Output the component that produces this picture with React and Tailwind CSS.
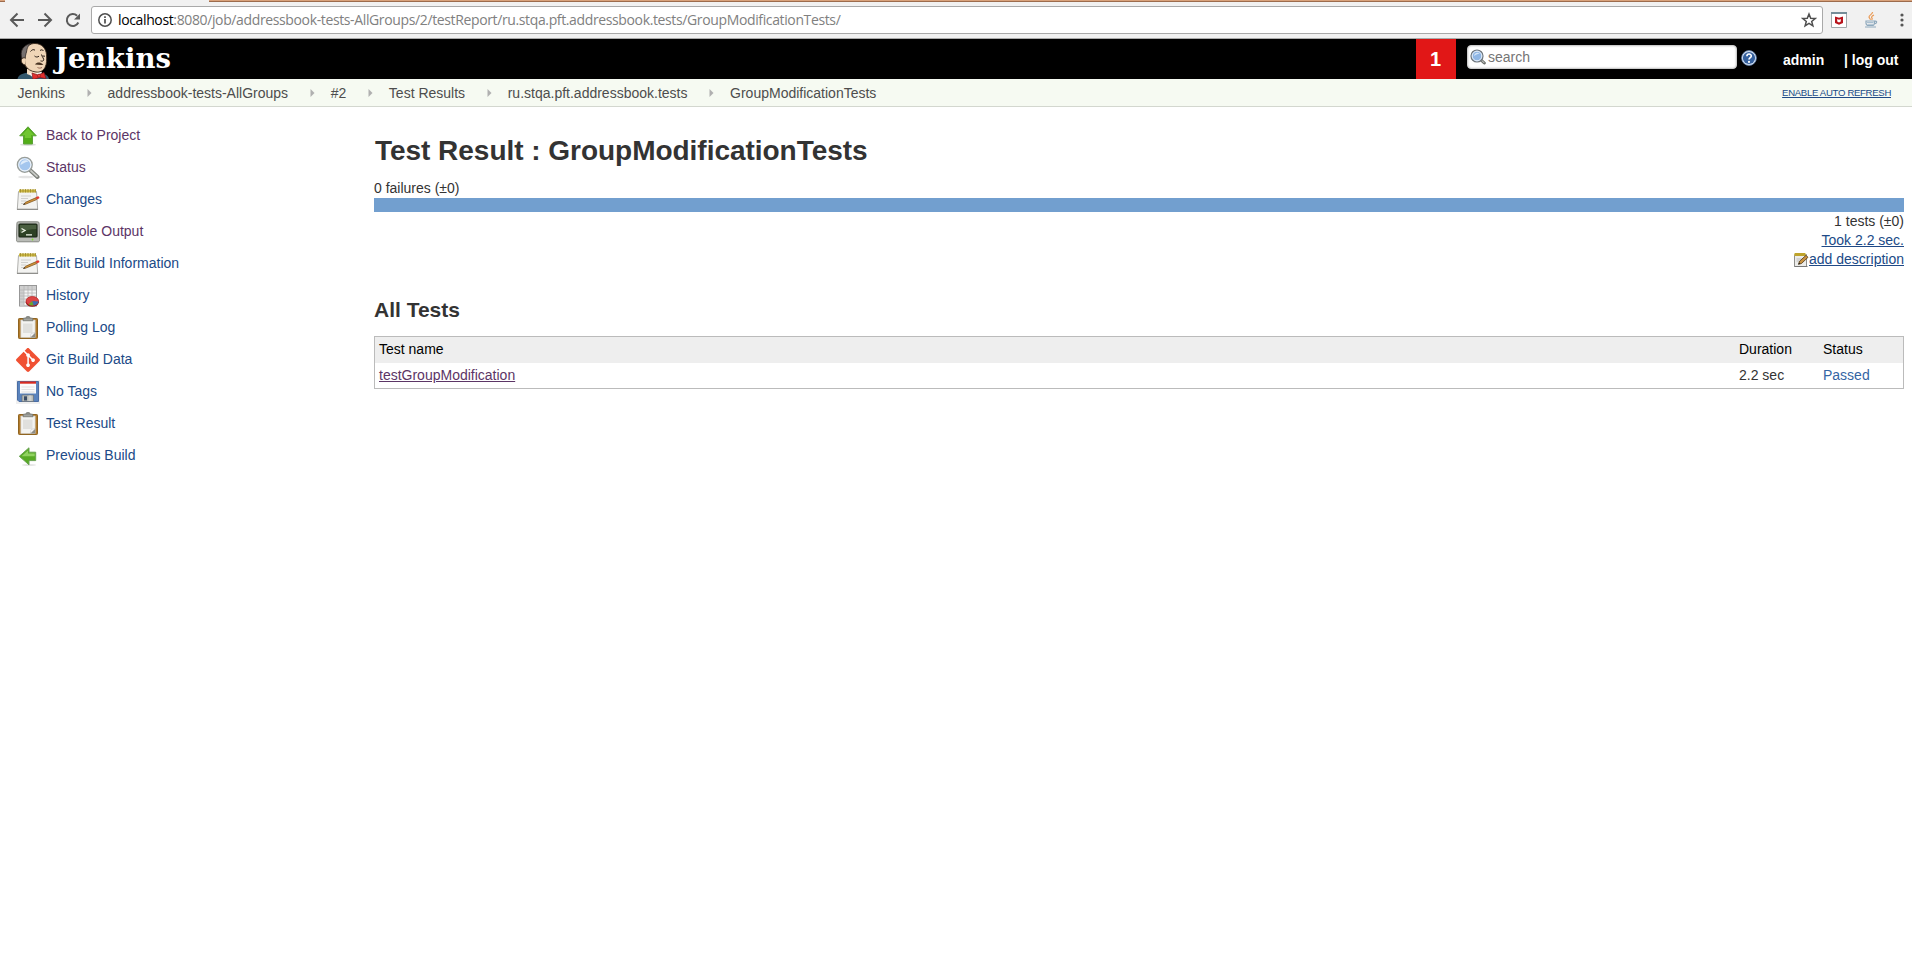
import React from 'react';

const LogoHead = () => (
  <svg width="34" height="37" viewBox="0 0 34 37" className="block">
    <path d="M.5 37c.5-3 3-5 8-6l6-1 9 1c5 1 8 3 8.500 6z" fill="#33576b" />
    <path d="M10 27h13v7l-6 1-7-3z" fill="#f3dcc0" />
    <path d="M12 31l4 5 2-3 4 3 3-5-1-2-5 3z" fill="#fff" />
    <path d="M7 11C8.500 4 13 1.500 18 1.500c7 0 11 5 11.500 11 .3 5 .5 9-1.500 13-2 3.500-5 5-9 4.500-5-.5-9-3-11-7z" fill="#f0d6b7" stroke="#3a2a1c" strokeWidth=".9" />
    <path d="M5 17C2.500 9 6 3 14 1.500 10.500 4 10 7 9.500 10c-.6 2-1.300 4-1.300 7z" fill="#77716f" stroke="#2c2522" strokeWidth=".8" />
    <path d="M8.500 16c-5-1.500-6 5.500-.5 7" fill="#f0d6b7" stroke="#3a2a1c" strokeWidth="1" />
    <path d="M13.500 9.500c1.500-2 3-2.300 4.500-1.300M23 8.500c1.500-1 2.500-1 3.500.5M17.500 14c1.500 1.300 3 1.300 4.500.2M25.500 14l2.500.2M24.500 12.500c.5 2.500 3 4.500 2 6-.8 1-2 .6-3 .4" fill="none" stroke="#2c2018" strokeWidth="1" />
    <path d="M18 22.500c1.500-2 4-2.500 6-1.500l2.500 1.500c-2.500 1-5 .3-8.500 0z" fill="#4a3524" />
    <path d="M20.500 25.500c1.500.8 3 .8 4.500 0" fill="none" stroke="#8a5a48" strokeWidth=".9" />
    <path d="M15 31l6 2 6-2.500 2 6-6.500-1-6.500 2z" fill="#e0302e" stroke="#81161a" strokeWidth=".7" />
    <circle cx="22" cy="33.700" r="1.600" fill="#ef3d3a" stroke="#81161a" strokeWidth=".6" />
  </svg>
);

const Up = () => (
  <svg width="24" height="24" viewBox="0 0 24 24">
    <ellipse cx="12" cy="20.700" rx="8" ry="1.300" fill="#ddd" />
    <path d="M12 2.800l8.300 9h-3.800v8.200H7.500v-8.200H3.700z" fill="#52ad18" stroke="#5da238" strokeWidth="1" />
    <path d="M12 4.500l6 6.600h-2.800v3H8.800v-3H6z" fill="#7fd03c" opacity=".7" />
  </svg>
);
const Left = () => (
  <svg width="24" height="24" viewBox="0 0 24 24">
    <ellipse cx="13" cy="21" rx="7" ry="1" fill="#e5e5e5" />
    <path d="M3.300 12.300l9.700-8.500v4.400h6.700v8.400H13v4.200z" fill="#58ab25" stroke="#6aa352" strokeWidth="1" />
    <path d="M5.500 12.300l6.500-5.800v3h6.700v2.800z" fill="#9bd86c" opacity=".85" />
  </svg>
);
const Search = ({ size = 24 }) => (
  <svg width={size} height={size} viewBox="0 0 24 24">
    <ellipse cx="10" cy="21" rx="8" ry="1.300" fill="#e4e4e4" />
    <path d="M14.500 14.500l7 6.500" stroke="#7c7f7a" strokeWidth="4" strokeLinecap="round" />
    <path d="M15 14.800l6 5.600" stroke="#c9cbc7" strokeWidth="1.800" strokeLinecap="round" />
    <circle cx="8.800" cy="8.800" r="7.400" fill="#a4c6ee" stroke="#9a9e99" strokeWidth="1.400" />
    <circle cx="8.800" cy="8.800" r="6.100" fill="none" stroke="#eef3f8" strokeWidth="1.100" />
    <path d="M4.500 9c0-3 2-4.800 5-4.800 1.500 0 2.500.6 3 1.300C9 6 7 8 4.500 9z" fill="#dfecfa" />
  </svg>
);
const HeaderSearch = () => (
  <svg width="16" height="16" viewBox="0 0 16 16">
    <path d="M11 11l3.300 3" stroke="#676a66" strokeWidth="3" strokeLinecap="round" />
    <path d="M11.300 11.200l2.700 2.500" stroke="#b9bbb7" strokeWidth="1.100" strokeLinecap="round" />
    <circle cx="7" cy="7" r="6" fill="#8fb6e4" stroke="#70767a" strokeWidth="1.200" />
    <circle cx="7" cy="7" r="4.800" fill="none" stroke="#e8eff7" strokeWidth="1" />
    <path d="M4 7c0-2 1.500-3.300 3.500-3.300 1 0 1.700.4 2 .9C7.300 5 5.500 6 4 7z" fill="#d3e4f7" />
  </svg>
);
const Notepad = () => (
  <svg width="24" height="24" viewBox="0 0 24 24">
    <path d="M2.500 3.500h18l1.200 18H1.300z" fill="#f3f3f1" stroke="#b0b0ad" strokeWidth="1" />
    <path d="M1 20.700h21V22H1z" fill="#8f8f8c" />
    <path d="M3 1.500h17v3H3z" fill="#cdb944" />
    <path d="M4.500 1v3.500M7 1v3.500M9.500 1v3.500M12 1v3.500M14.500 1v3.500M17 1v3.500M19.300 1v3.500" stroke="#9a872a" strokeWidth=".8" />
    <path d="M5 8h10M5 10.500h7M5 13h5M5 15.500h3" stroke="#cfcfcd" strokeWidth="1" />
    <path d="M7.500 16.500l2-2.200 10.300-4.500.8 1.800L10 16z" fill="#d8973a" stroke="#7d5520" strokeWidth=".8" />
    <path d="M7 16.800l1.500-1.600 1 1z" fill="#333" />
    <path d="M19.700 9.300l2.300-1c.9 0 1.700 1.200 1.300 1.900l-2.400 1.200z" fill="#e33b2e" />
  </svg>
);
const Terminal = () => (
  <svg width="24" height="24" viewBox="0 0 24 24">
    <path d="M2.500 1.800h19c1 0 1.500.5 1.600 1.500l.6 16.500c0 1.200-.6 2-1.800 2H2.100c-1.200 0-1.800-.8-1.800-2l.6-16.500c.1-1 .6-1.500 1.600-1.500z" fill="#b9bbb6" stroke="#7c7e78" strokeWidth=".9" />
    <rect x="3" y="4" width="18" height="13" rx="1" fill="#2d4124" stroke="#1b2616" strokeWidth="1.200" />
    <path d="M3.800 5h16.500v4c-6 0-12 1-16.500 4z" fill="#5a7050" opacity=".65" />
    <path d="M5.500 8.500l3.500 2-3.500 2M10 14.800h6" fill="none" stroke="#eef5e8" strokeWidth="1.300" />
    <circle cx="16.500" cy="19.500" r=".9" fill="#7ee02c" />
  </svg>
);
const History = () => (
  <svg width="24" height="24" viewBox="0 0 24 24">
    <rect x="3.500" y="1.500" width="17" height="20.500" fill="#f3f3f3" stroke="#979797" />
    <path d="M4 2h16v4H4zM4 6h4v15.500H4z" fill="#cfcfcf" />
    <path d="M8 2v19.500M12 2v19M16 2v19M4 6h16M4 9h16M4 12h16M4 15h16M4 18h16" stroke="#b5b5b5" strokeWidth=".8" />
    <ellipse cx="16.300" cy="18.300" rx="6.500" ry="4.500" fill="#8c1616" />
    <ellipse cx="16.300" cy="17" rx="6.300" ry="4.500" fill="#dc4545" stroke="#b82525" strokeWidth=".7" />
    <path d="M16.300 17l-3.800 3.500c1.500.9 3.200 1.200 4.800 1z" fill="#67a92c" />
    <path d="M16.300 17l1.300 4.500c2.800-.4 4.600-1.900 5-3.900z" fill="#3d6cb0" />
  </svg>
);
const Clipboard = () => (
  <svg width="24" height="24" viewBox="0 0 24 24">
    <rect x="2.500" y="2.500" width="19" height="20" rx=".8" fill="#b27b2c" stroke="#8f6420" />
    <path d="M4.800 4h14.400v17.500H4.800z" fill="#f3f3f1" stroke="#c9c7c0" strokeWidth=".6" />
    <path d="M7 7.500h9.500v9.500H7z" fill="#e0e0dd" />
    <path d="M19.200 16.500l-5 5h5z" fill="#8d8d89" />
    <path d="M14.200 21.500l1-4 4-1z" fill="#fff" stroke="#bbb" strokeWidth=".5" />
    <path d="M7 4.800V2.900c0-.6.500-.9 1.200-.9h1.500C10 .8 10.700.3 12 .3s2 .5 2.300 1.700h1.500c.7 0 1.200.3 1.200.9v1.900z" fill="#8a8c87" stroke="#74766f" strokeWidth=".6" />
    <path d="M8 3.300h8" stroke="#b0b2ad" strokeWidth=".8" />
  </svg>
);
const Git = () => (
  <svg width="24" height="24" viewBox="0 0 24 24">
    <path d="M23.546 10.930L13.067.452c-.604-.603-1.582-.603-2.188 0L8.708 2.627l2.760 2.760c.645-.215 1.379-.070 1.889.441.516.515.658 1.258.438 1.900l2.658 2.660c.645-.223 1.387-.078 1.900.435.721.720.721 1.884 0 2.604-.719.719-1.881.719-2.600 0-.539-.541-.674-1.337-.404-1.996L12.860 8.955v6.525c.176.086.342.203.488.348.713.721.713 1.883 0 2.600-.719.721-1.889.721-2.609 0-.719-.719-.719-1.879 0-2.598.182-.180.387-.316.605-.406V8.835c-.217-.091-.424-.222-.600-.401-.545-.545-.676-1.342-.396-2.009L7.636 3.700.450 10.881c-.600.605-.600 1.584 0 2.189l10.480 10.477c.604.604 1.582.604 2.186 0l10.430-10.430c.605-.603.605-1.582 0-2.187" fill="#f05133" />
  </svg>
);
const Floppy = () => (
  <svg width="24" height="24" viewBox="0 0 24 24">
    <path d="M0 0h24v24H0z" fill="#efefef" />
    <path d="M1.500 1.500h21v20H3L1.500 20z" fill="#5a83bd" stroke="#4a6da3" />
    <path d="M4 2h16v11.500H4z" fill="#fafafa" />
    <path d="M4 1.500h16v2.200H4z" fill="#d92b20" />
    <path d="M5.500 7h13M5.500 9.500h13M5.500 12h13" stroke="#dedede" strokeWidth=".9" />
    <path d="M6 15h11.500v6.500H6z" fill="#b9bcb7" stroke="#67707a" strokeWidth=".7" />
    <path d="M8 16.300h3v4.200H8z" fill="#3a4c66" />
    <path d="M12.500 15.500h3v5.500h-3z" fill="#d0d2ce" />
  </svg>
);
const SmallNote = () => (
  <svg width="16" height="16" viewBox="0 0 16 16">
    <path d="M1.500 2.500h12v12h-12z" fill="#ececea" stroke="#8e8e8b" />
    <path d="M1.500 14.500h13" stroke="#777" />
    <path d="M1.500 1h11v3h-11z" fill="#d9bd3a" />
    <path d="M3 1v3M5 1v3M7 1v3M9 1v3M11 1v3" stroke="#8f7615" strokeWidth=".7" />
    <path d="M3.500 7h5M3.500 9h3" stroke="#bbb" />
    <path d="M5.500 12.300l1-3 6.500-6 2 2-6.500 6.200z" fill="#c99240" stroke="#4c3614" strokeWidth=".8" />
    <path d="M5.300 12.600l.8-2 1.200 1.200z" fill="#222" />
  </svg>
);
const Help = () => (
  <svg width="16" height="16" viewBox="0 0 16 16">
    <circle cx="8" cy="8" r="7.400" fill="#dce6f4" stroke="#5d7fae" strokeWidth=".8" />
    <circle cx="8" cy="8" r="6.100" fill="#35619f" />
    <path d="M5.900 6.200c0-2.900 4.400-2.700 4.400-.3C10.300 7.600 8 7.600 8 9.600" fill="none" stroke="#fff" strokeWidth="1.600" />
    <circle cx="8" cy="11.900" r="1.050" fill="#fff" />
  </svg>
);

const menu = [
  ['Back to Project', Up, true],
  ['Status', Search, true],
  ['Changes', Notepad, false],
  ['Console Output', Terminal, true],
  ['Edit Build Information', Notepad, false],
  ['History', History, false],
  ['Polling Log', Clipboard, false],
  ['Git Build Data', Git, false],
  ['No Tags', Floppy, false],
  ['Test Result', Clipboard, false],
  ['Previous Build', Left, false],
];

const crumbs = ['Jenkins', 'addressbook-tests-AllGroups', '#2', 'Test Results', 'ru.stqa.pft.addressbook.tests', 'GroupModificationTests'];

function BrowserBar() {
  return (
    <div className="flex h-[39px] flex-col border-b border-[#a9a9a9] bg-[#f1f1f1]">
      <div className="flex h-[2px] justify-between">
        <div className="h-[2px] w-[5px] border-b border-[#9c6b4c] bg-[#d9a27b]" />
        <div className="h-[2px] w-[1703px] border-b border-[#9c6b4c] bg-[#d9a27b]" />
      </div>
      <div className="flex h-9 items-center">
        <svg width="91" height="28" viewBox="0 0 91 28" fill="none" stroke="#5a5a5a" strokeWidth="2">
          <path d="M24 14H11M17.500 7.500L11 14l6.500 6.500" />
          <path d="M38 14h13M44.500 7.500L51 14l-6.500 6.500" />
          <path d="M78.300 16.500a6 6 0 1 1-1.200-6.700" />
          <path d="M80 7.500v6h-6z" fill="#5a5a5a" stroke="none" />
        </svg>
        <div className="flex h-7 w-[1732px] items-center rounded-[3px] border border-[#a9a9a9] bg-white pl-[6px] pr-[5px]">
          <svg width="14" height="14" viewBox="0 0 14 14" fill="none" stroke="#4f4f4f">
            <circle cx="7" cy="7" r="6.200" strokeWidth="1.500" />
            <path d="M7 6v4.500M7 3.300v1.700" strokeWidth="1.700" />
          </svg>
          <div className="ml-[6px] flex-1 whitespace-nowrap font-['Open_Sans',sans-serif] text-[14px] leading-5 tracking-[-0.37px] text-[#808080]">
            <span className="text-black">localhost</span>:8080/job/addressbook-tests-AllGroups/2/testReport/ru.stqa.pft.addressbook.tests/GroupModificationTests/
          </div>
          <svg width="16" height="16" viewBox="0 0 16 16" fill="none" stroke="#4f4f4f" strokeWidth="1.500">
            <path d="M8 2l1.700 4.200 4.500.3-3.500 2.900 1.200 4.400L8 11.400l-3.900 2.400 1.200-4.400L1.800 6.500l4.500-.3z" />
          </svg>
        </div>
        <svg className="ml-2" width="16" height="16" viewBox="0 0 16 16">
          <path d="M.5.500h15v15H.5z" fill="#fff" stroke="#a2a8ab" />
          <path d="M0 0h16v2H0z" fill="#758d98" />
          <path d="M4 4.500l4 1.200 4-1.200v6.500L8 12.800 4 11z" fill="#b8141c" />
          <path d="M6.200 7l1.800.8L9.800 7v2.600L8 10.500l-1.800-.9z" fill="#fff" />
        </svg>
        <svg className="ml-[17px]" width="14" height="16" viewBox="0 0 14 16" fill="none">
          <path d="M8.500 0c.5 2-3.500 3-3.500 5 0 1 1.500 1.700 1.500 2.800M10 3C8 4 7 5 8 6.200c.4.600 0 1.200-.4 1.600" stroke="#ea9a55" strokeWidth="1.200" />
          <path d="M2 9h8.500v2c0 1.500-1 2.500-2.500 2.500H4.500C3 13.500 2 12.500 2 11zM10.500 9.300c3-.6 2.800 2.200-.3 2.600M1 15h11" stroke="#8fa9bd" strokeWidth="1.200" />
          <path d="M3 10.500h6.500M3.500 12.300h5.500" stroke="#a9bfd0" />
        </svg>
        <svg className="ml-[21px]" width="6" height="16" viewBox="0 0 6 16" fill="#555">
          <circle cx="3" cy="3" r="1.600" /><circle cx="3" cy="8" r="1.600" /><circle cx="3" cy="13" r="1.600" />
        </svg>
      </div>
    </div>
  );
}

function Header() {
  return (
    <div className="flex h-10 bg-black">
      <div className="flex h-10 w-[1416px] items-end overflow-hidden pl-[17px]">
        <LogoHead />
        <div className="ml-[4px] h-10 pt-[4px] font-['DejaVu_Serif',serif] text-[27.500px] font-bold leading-[30px] tracking-[0.1px] text-white">Jenkins</div>
      </div>
      <div className="flex w-10 items-center justify-center bg-[#e11717] pr-px text-[20px] font-bold text-white">1</div>
      <div className="ml-[11px] mt-[6px] flex h-6 w-[270px] items-center rounded-[4px] border border-[#ccc] bg-white pl-[2px] text-[14px] text-[#757575] shadow-[inset_0_0_2px_#bbb]">
        <HeaderSearch />
        <span className="ml-[2px]">search</span>
      </div>
      <div className="ml-[4px] mt-[11px]"><Help /></div>
      <div className="ml-[26px] mt-[11px] w-[61px] text-[14px] font-bold leading-5 text-white">admin</div>
      <div className="mt-[11px] whitespace-pre text-[14px] font-bold leading-5 text-white">| log out</div>
    </div>
  );
}

export default function App() {
  return (
    <div className="h-[964px] overflow-hidden bg-white font-['Liberation_Sans',Arial,sans-serif] text-[14px] text-[#333]">
      <BrowserBar />
      <Header />
      <div className="flex h-7 items-center justify-between border-b border-[#d3d7cf] bg-[#f6faf2] pl-[17.500px] pr-[21px] pt-px text-[#4d4d4d]">
        <div className="flex items-center">
          {crumbs.map((c, i) => (
            <React.Fragment key={c}>
              {i > 0 && (
                <svg className="ml-[21.600px] mr-[16px]" width="5" height="8" viewBox="0 0 5 8"><path d="M.5 0L4.500 4 .5 8z" fill="#b0b0b0" /></svg>
              )}
              <span className="whitespace-nowrap">{c}</span>
            </React.Fragment>
          ))}
        </div>
        <a className="text-[9.600px] tracking-[-0.32px] text-[#204a87] underline">ENABLE AUTO REFRESH</a>
      </div>
      <div className="flex">
        <div className="w-[374px] pl-4 pt-[13px]">
          {menu.map(([label, Icon, visited]) => (
            <div key={label} className="flex h-8 items-center gap-[6px]">
              <Icon />
              <a className={visited ? 'pb-0.5 text-[#5c3566]' : 'pb-0.5 text-[#204a87]'}>{label}</a>
            </div>
          ))}
        </div>
        <div className="w-[1530px] pt-[24px]">
          <h1 className="h-[48px] pl-px text-[28px] font-bold leading-[40px] tracking-[-0.03px]">Test Result : GroupModificationTests</h1>
          <div className="h-[19px] leading-[19px]">0 failures (±0)</div>
          <div className="h-[14px] bg-[#729fcf]" />
          <div className="flex flex-col items-end leading-[19px]">
            <div>1 tests (±0)</div>
            <a className="text-[#204a87] underline">Took 2.2 sec.</a>
            <div className="flex items-center"><SmallNote /><a className="text-[#204a87] underline">add description</a></div>
          </div>
          <h2 className="mt-[27px] h-[40px] text-[21px] font-bold leading-[28px]">All Tests</h2>
          <div className="border border-[#bbb]">
            <div className="flex h-[26px] items-center bg-[#eee] pb-px pl-[4px] text-black">
              <div className="w-[1360px]">Test name</div><div className="w-[84px]">Duration</div><div>Status</div>
            </div>
            <div className="flex h-[25px] items-center pl-[4px]">
              <div className="w-[1360px]"><a className="text-[#5c3566] underline">testGroupModification</a></div><div className="w-[84px]">2.2 sec</div><div className="text-[#3465a4]">Passed</div>
            </div>
          </div>
        </div>
      </div>
    </div>
  );
}
